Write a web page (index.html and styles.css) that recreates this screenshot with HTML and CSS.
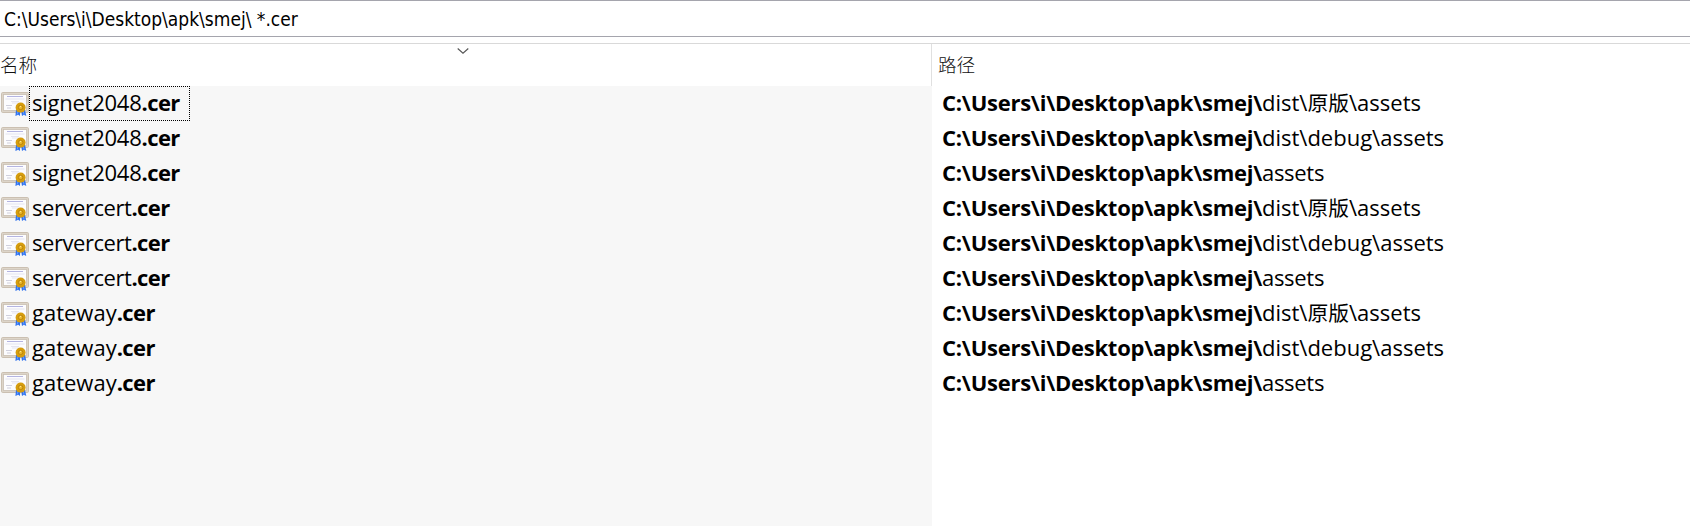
FILE: index.html
```
<!DOCTYPE html>
<html lang="zh-CN">
<head>
<meta charset="utf-8">
<title>smej *.cer</title>
<link rel="stylesheet" href="styles.css">
</head>
<body>
<svg width="0" height="0" class="defs">
  <symbol id="cert" viewBox="0 0 28 25">
    <rect x=".5" y=".5" width="27" height="20" rx="1.2" fill="#ddd5c9" stroke="#cbc0b2"/>
    <rect x="2.500" y="2.500" width="23" height="16" fill="#fcfcfe" stroke="#c9bfb2" stroke-width=".8"/>
    <path d="M6 4.500h16" stroke="#b4b4e0" stroke-width="1"/>
    <path d="M4.500 7h19M10 9.500h8M11 11h6" stroke="#dedeec" stroke-width=".8"/>
    <path d="M5 13.500h6M6 16h4" stroke="#c4c4d4" stroke-width=".8"/>
    <path d="M15 18h4.400l-.5 6-1.700-1.300-2.800 1.300z" fill="#2f72ee"/>
    <path d="M20 18h4l1.300 6-2.500-1.300-1.800 1.300z" fill="#2f72ee"/>
    <path d="M17 19.500l-.8 3M22.300 19.500l.8 3" stroke="#78a9ff" stroke-width=".8"/>
    <circle cx="19.600" cy="15.600" r="5" fill="#d69d0e"/>
    <circle cx="19.600" cy="15.400" r="2.200" fill="#e9b52a" stroke="#b58008" stroke-width=".8"/>
    <path d="M18.900 15.100l1.200-1" stroke="#fff0a0" stroke-width=".9"/>
  </symbol>
</svg>
<div class="search"><span class="query">C:\Users\i\Desktop\apk\smej\ *.cer</span></div>
<main class="list">
  <section class="names">
    <header class="head"><span>名称</span>
      <svg class="sort" width="12" height="6" viewBox="0 0 12 6"><path d="M.7.5L6 5.200 11.300.5" fill="none" stroke="#555" stroke-width="1.100"/></svg>
    </header>
    <div class="row"><svg class="icon"><use href="#cert"/></svg><span class="name focus"><span class="sig">signet2048</span><b>.cer</b></span></div>
    <div class="row"><svg class="icon"><use href="#cert"/></svg><span class="name"><span class="sig">signet2048</span><b>.cer</b></span></div>
    <div class="row"><svg class="icon"><use href="#cert"/></svg><span class="name"><span class="sig">signet2048</span><b>.cer</b></span></div>
    <div class="row"><svg class="icon"><use href="#cert"/></svg><span class="name"><span class="srv">servercert</span><b>.cer</b></span></div>
    <div class="row"><svg class="icon"><use href="#cert"/></svg><span class="name"><span class="srv">servercert</span><b>.cer</b></span></div>
    <div class="row"><svg class="icon"><use href="#cert"/></svg><span class="name"><span class="srv">servercert</span><b>.cer</b></span></div>
    <div class="row"><svg class="icon"><use href="#cert"/></svg><span class="name"><span class="gate">gateway</span><b>.cer</b></span></div>
    <div class="row"><svg class="icon"><use href="#cert"/></svg><span class="name"><span class="gate">gateway</span><b>.cer</b></span></div>
    <div class="row"><svg class="icon"><use href="#cert"/></svg><span class="name"><span class="gate">gateway</span><b>.cer</b></span></div>
  </section>
  <section class="paths">
    <header class="head"><span>路径</span></header>
    <div class="row"><b>C:\Users\i\Desktop\apk\smej\</b><span>dist\<i>原版</i>\assets</span></div>
    <div class="row"><b>C:\Users\i\Desktop\apk\smej\</b><span>dist\debug\assets</span></div>
    <div class="row"><b>C:\Users\i\Desktop\apk\smej\</b><span class="short">assets</span></div>
    <div class="row"><b>C:\Users\i\Desktop\apk\smej\</b><span>dist\<i>原版</i>\assets</span></div>
    <div class="row"><b>C:\Users\i\Desktop\apk\smej\</b><span>dist\debug\assets</span></div>
    <div class="row"><b>C:\Users\i\Desktop\apk\smej\</b><span class="short">assets</span></div>
    <div class="row"><b>C:\Users\i\Desktop\apk\smej\</b><span>dist\<i>原版</i>\assets</span></div>
    <div class="row"><b>C:\Users\i\Desktop\apk\smej\</b><span>dist\debug\assets</span></div>
    <div class="row"><b>C:\Users\i\Desktop\apk\smej\</b><span class="short">assets</span></div>
  </section>
</main>
</body>
</html>
```
FILE: styles.css
```
* { box-sizing: border-box; }
body {
  margin: 0;
  height: 526px;
  display: flex;
  flex-direction: column;
  overflow: hidden;
  background: #fff;
  color: #000;
  font: 22px/33px "Open Sans", "Noto Sans CJK SC", sans-serif;
}
.defs { display: block; flex: none; height: 0; }
.search {
  height: 37px;
  flex: none;
  margin-bottom: 6px;
  padding-left: 4px;
  border-top: 1px solid #a5a5ad;
  border-bottom: 1px solid #a5a5ad;
  font: 19px/37px "DejaVu Sans Condensed", "DejaVu Sans", sans-serif;
  font-stretch: condensed;
}
.query { white-space: pre; }
.list { flex: 1; display: flex; border-top: 1px solid #d9d9d9; }
.names { width: 932px; background: #f7f7f7; }
.paths { flex: 1; }
.head {
  height: 42px;
  display: flex;
  background: #fff;
  color: #111;
  font: 300 18.600px/40px "Noto Sans CJK SC", sans-serif;
}
.names .head { border-right: 1px solid #e0e0e0; }
.paths .head { padding-left: 6px; }
.sort { margin: 4px auto 0 420px; }
.row { height: 35px; display: flex; white-space: pre; }
.names .row { padding-left: 1px; }
.paths .row { padding-left: 10px; }
.paths b { width: 320px; letter-spacing: -0.25px; }
.icon { width: 28px; height: 25px; margin-top: 6px; }
.name { height: 35px; padding: 0 10px 0 3px; display: flex; }
.name b { letter-spacing: -0.6px; }
.sig { letter-spacing: -0.250px; }
.srv { letter-spacing: -0.450px; }
.short { letter-spacing: -0.300px; }
.name.focus { outline: 1px dotted #000; outline-offset: -1px; }
.row i { font-style: normal; font-family: "Noto Sans CJK SC", sans-serif; font-weight: 400; font-size: 20.800px; line-height: 1; }
```
